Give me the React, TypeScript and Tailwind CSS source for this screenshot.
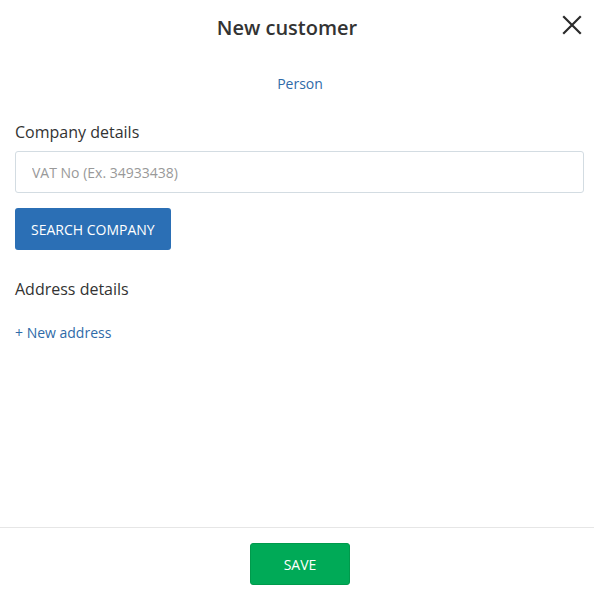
export default function App() {
  return (
    <div
      className="flex h-screen w-full flex-col bg-white text-[#333333]"
      style={{ fontFamily: '"Open Sans", "Noto Sans", sans-serif' }}
    >
      <div className="relative flex justify-center pr-[20px] pt-[14px]">
        <h1 className="text-[20px] font-semibold leading-[28px] text-[#333333]">New customer</h1>
        <button className="absolute right-[12px] top-[15px] flex h-[20px] w-[20px] items-center justify-center">
          <svg width="20" height="20" viewBox="0 0 20 20" fill="none">
            <path d="M2 2 L18 18 M18 2 L2 18" stroke="#2b2b2b" strokeWidth="2.2" strokeLinecap="square" />
          </svg>
        </button>
      </div>

      <div className="flex flex-1 flex-col pl-[15px] pr-[10px]">
        <div className="mt-[32px] flex justify-center pl-[1px]">
          <span className="text-[14px] leading-[20px] text-[#2f6aa8]">Person</span>
        </div>

        <h2 className="mt-[26px] text-[16px] leading-[24px] text-[#333333]">Company details</h2>
        <input
          className="mt-[7px] h-[42px] w-full rounded-[3px] border border-[#d3dce2] px-[16px] text-[14px] text-[#333333] outline-none placeholder:text-[#999999]"
          placeholder="VAT No (Ex. 34933438)"
        />
        <div className="mt-[15px]">
          <button className="h-[42px] rounded-[3px] bg-[#2b6fb5] px-[16px] text-[14px] uppercase text-white">
            Search company
          </button>
        </div>

        <h2 className="mt-[27px] text-[16px] leading-[24px] text-[#333333]">Address details</h2>
        <a className="mt-[22px] text-[14px] leading-[20px] text-[#2f6aa8]">+ New address</a>
      </div>

      <div className="flex h-[64px] justify-center border-t border-[#e6e6e6] pl-[6px] pt-[15px]">
        <button className="h-[42px] w-[100px] rounded-[3px] border border-[#009a4c] bg-[#00aa57] text-[14px] text-white">
          SAVE
        </button>
      </div>
    </div>
  );
}
